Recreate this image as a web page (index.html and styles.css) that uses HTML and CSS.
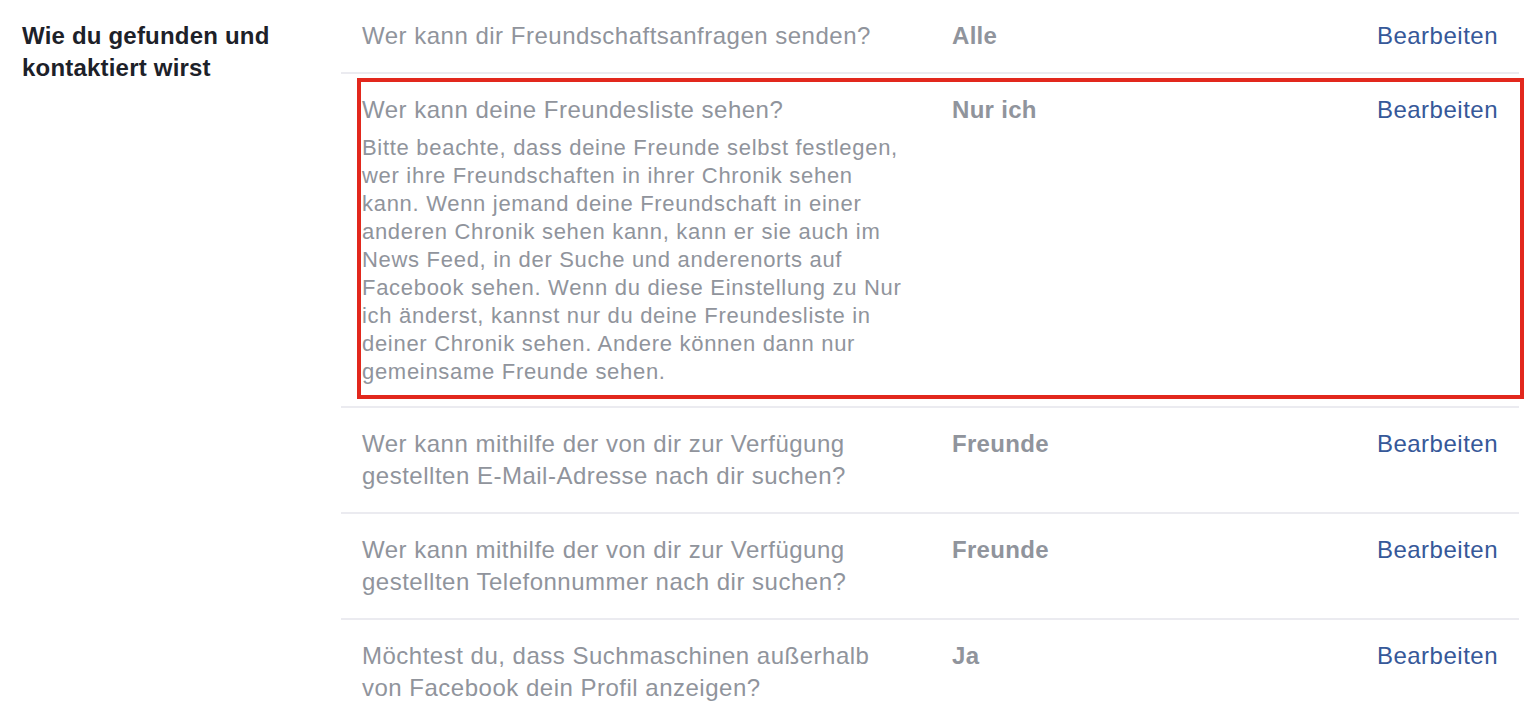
FILE: index.html
```html
<!DOCTYPE html>
<html lang="de">
<head>
  <meta charset="UTF-8">
  <meta name="viewport" content="width=device-width, initial-scale=1.0">
  <title>Privatsphäre-Einstellungen</title>
  <link rel="stylesheet" href="styles.css">
</head>
<body>
  <div class="section">
    <h2 class="section-title">Wie du gefunden und<br>kontaktiert wirst</h2>
    <div class="settings">
      <div class="row">
        <div class="question">Wer kann dir Freundschaftsanfragen senden?</div>
        <div class="value">Alle</div>
        <a class="edit" href="#">Bearbeiten</a>
      </div>
      <div class="row highlighted">
        <div class="question">
          Wer kann deine Freundesliste sehen?
          <p class="note">Bitte beachte, dass deine Freunde selbst festlegen,<br>wer ihre Freundschaften in ihrer Chronik sehen<br>kann. Wenn jemand deine Freundschaft in einer<br>anderen Chronik sehen kann, kann er sie auch im<br>News Feed, in der Suche und anderenorts auf<br>Facebook sehen. Wenn du diese Einstellung zu Nur<br>ich änderst, kannst nur du deine Freundesliste in<br>deiner Chronik sehen. Andere können dann nur<br>gemeinsame Freunde sehen.</p>
        </div>
        <div class="value">Nur ich</div>
        <a class="edit" href="#">Bearbeiten</a>
        <span class="marker"></span>
      </div>
      <div class="row">
        <div class="question">Wer kann mithilfe der von dir zur Verfügung gestellten E-Mail-Adresse nach dir suchen?</div>
        <div class="value">Freunde</div>
        <a class="edit" href="#">Bearbeiten</a>
      </div>
      <div class="row">
        <div class="question">Wer kann mithilfe der von dir zur Verfügung gestellten Telefonnummer nach dir suchen?</div>
        <div class="value">Freunde</div>
        <a class="edit" href="#">Bearbeiten</a>
      </div>
      <div class="row">
        <div class="question">Möchtest du, dass Suchmaschinen außerhalb von Facebook dein Profil anzeigen?</div>
        <div class="value">Ja</div>
        <a class="edit" href="#">Bearbeiten</a>
      </div>
    </div>
  </div>
</body>
</html>
```

FILE: styles.css
```css
html {
  font-family: "Liberation Sans", Arial, sans-serif;
}

body {
  margin: 0;
  background: #fff;
  overflow: hidden;
}

.section {
  display: flex;
}

.section-title {
  width: 319px;
  margin: 0;
  padding: 20px 0 0 22px;
  color: #1d2129;
  font-size: 24px;
  font-weight: bold;
  letter-spacing: 0.2px;
  line-height: 32px;
}

.settings {
  width: 1178px;
}

.row {
  position: relative;
  display: grid;
  grid-template-columns: 540px 1fr auto;
  column-gap: 50px;
  padding: 20px 21px;
  border-top: 2px solid #ebebf0;
  font-size: 24px;
  letter-spacing: 0.5px;
  line-height: 32px;
  color: #90949c;
}

.row:first-child {
  border-top: none;
}

.value {
  font-weight: bold;
  letter-spacing: 0.3px;
}

.edit {
  color: #365899;
  text-decoration: none;
}

.note {
  margin: 8px 0 0;
  font-size: 22px;
  letter-spacing: 0.7px;
  line-height: 28px;
  white-space: nowrap;
}

.marker {
  position: absolute;
  top: 4px;
  left: 16px;
  right: -5px;
  bottom: 7px;
  border: 4px solid #e2281d;
  pointer-events: none;
}
```
